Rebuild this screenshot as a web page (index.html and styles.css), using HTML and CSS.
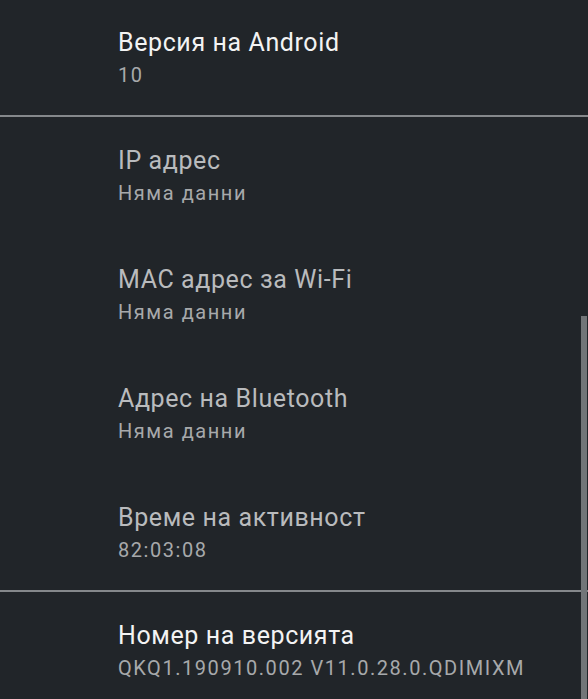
FILE: index.html
```html
<!DOCTYPE html>
<html>
<head>
<link rel="stylesheet" href="styles.css">
</head>
<body>
    <div id="screen">
        <div class="group group-top">
            <div class="pref">
                <div class="pref-title">Версия на Android</div>
                <div class="pref-summary">10</div>
            </div>
        </div>
        <div class="divider"></div>
        <div class="group">
            <div class="pref disabled">
                <div class="pref-title">IP адрес</div>
                <div class="pref-summary">Няма данни</div>
            </div>
            <div class="pref disabled">
                <div class="pref-title">MAC адрес за Wi-Fi</div>
                <div class="pref-summary">Няма данни</div>
            </div>
            <div class="pref disabled">
                <div class="pref-title">Адрес на Bluetooth</div>
                <div class="pref-summary">Няма данни</div>
            </div>
            <div class="pref disabled">
                <div class="pref-title">Време на активност</div>
                <div class="pref-summary">82:03:08</div>
            </div>
        </div>
        <div class="divider"></div>
        <div class="group">
            <div class="pref">
                <div class="pref-title">Номер на версията</div>
                <div class="pref-summary">QKQ1.190910.002 V11.0.28.0.QDIMIXM</div>
            </div>
        </div>
        <div class="scrollbar"></div>
    </div>
</body>
</html>
```

FILE: styles.css
```css
html, body {
    margin: 0;
    padding: 0;
    background: #212529;
}
#screen {
    position: relative;
    width: 588px;
    height: 699px;
    overflow: hidden;
    background: #212529;
    font-family: Roboto, "Noto Sans", sans-serif;
}
.group {
    display: flex;
    flex-direction: column;
    gap: 55px;
    padding: 28px 0 24px 118px;
}
.group-top {
    padding-top: 27px;
}
.divider {
    height: 2px;
    background: #85888b;
}
.pref-title {
    font-size: 25px;
    line-height: 32px;
    letter-spacing: 0.6px;
    color: #f3f3f3;
}
.pref-summary {
    font-size: 20px;
    line-height: 32px;
    letter-spacing: 1.55px;
    color: #a7a9ab;
}
.pref.disabled .pref-title {
    color: #b9bbbd;
}
.scrollbar {
    position: absolute;
    left: 581px;
    top: 316px;
    width: 6px;
    height: 383px;
    background: #727578;
}
```
